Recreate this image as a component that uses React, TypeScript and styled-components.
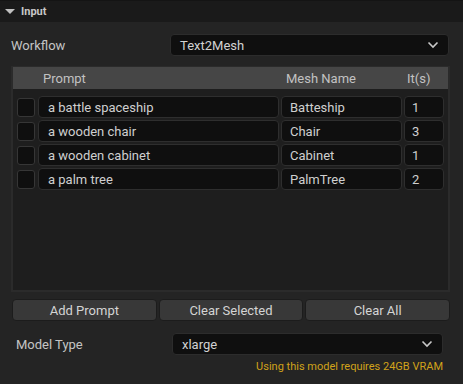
import styled, { createGlobalStyle } from "styled-components";

const GlobalStyle = createGlobalStyle`
    html, body {
        margin: 0;
        padding: 0;
        background: #242424;
    }
    body {
        font-family: Roboto, "Noto Sans", sans-serif;
        color: #c4c4c4;
    }
`

const Page = styled.div`
    width: 463px;
    height: 384px;
    background: #242424;
    overflow: hidden;
`

const SectionHeader = styled.div`
    height: 21px;
    border-top: 1px solid #141414;
    background: #1a1a1a;
    display: flex;
    align-items: center;
    padding-left: 5px;
    font-size: 11px;
    font-weight: 700;
    color: #c8c8c8;
`

const Arrow = styled.span`
    width: 0;
    height: 0;
    border-left: 5px solid transparent;
    border-right: 5px solid transparent;
    border-top: 5px solid #c0c0c0;
    margin-right: 6px;
`

const Content = styled.div`
    padding: 0 13px 0 11px;
`

const FieldRow = styled.div <{ top: number, indent: number, right: number }>`
    display: flex;
    align-items: center;
    margin-top: ${props => props.top}px;
    padding-left: ${props => props.indent}px;
    padding-right: ${props => props.right}px;
`

const Label = styled.div <{ width: number }>`
    width: ${props => props.width}px;
    font-size: 13px;
    color: #c4c4c4;
`

const Dropdown = styled.div`
    flex: 1;
    height: 20px;
    background: #0f0f0f;
    border: 1px solid #2c2c2c;
    border-radius: 4px;
    display: flex;
    align-items: center;
    justify-content: space-between;
    padding: 0 9px;
    font-size: 13px;
    color: #d2d2d2;
`

const Chevron = () => (
    <svg width="12" height="8" viewBox="0 0 12 8">
        <path d="M1.5 1.5 L6 6 L10.5 1.5" stroke="#c8c8c8" strokeWidth="1.6" fill="none" />
    </svg>
)

const TablePanel = styled.div`
    margin-top: 10px;
    height: 223px;
    border: 2px solid #2b2b2b;
    border-top-width: 1px;
    background: #1e1e1e;
`

const Columns = `
    display: grid;
    grid-template-columns: 19px 241px 121px 40px;
    column-gap: 2px;
`

const HeaderRow = styled.div`
    ${Columns}
    height: 22px;
    align-items: center;
    background: #464646;
    padding-left: 4px;
    font-size: 13px;
    color: #c2c2c2;
`

const HeaderCell = styled.div <{ offset: number }>`
    padding-left: ${props => props.offset}px;
`

const Rows = styled.div`
    padding: 7px 0 0 4px;
    display: flex;
    flex-direction: column;
    gap: 2px;
`

const Row = styled.div`
    ${Columns}
    height: 22px;
`

const CheckBox = styled.div`
    box-sizing: border-box;
    height: 19px;
    width: 18px;
    align-self: center;
    background: #0f0f0f;
    border: 1px solid #363636;
    border-radius: 3px;
`

const TextBox = styled.div <{ pad: number }>`
    box-sizing: border-box;
    background: #0f0f0f;
    border: 1px solid #2e2e2e;
    border-radius: 4px;
    display: flex;
    align-items: center;
    padding-left: ${props => props.pad}px;
    font-size: 13px;
    color: #cfcfcf;
`

const ButtonRow = styled.div`
    margin-top: 7px;
    padding-left: 1px;
    display: grid;
    grid-template-columns: 1fr 1fr 1fr;
    column-gap: 2px;
`

const Button = styled.div`
    height: 20px;
    background: #383838;
    border: 1px solid #1c1c1c;
    border-radius: 4px;
    display: flex;
    align-items: center;
    justify-content: center;
    font-size: 13px;
    color: #d4d4d4;
`

const Warning = styled.div`
    margin-top: 5px;
    padding-right: 7px;
    text-align: right;
    font-size: 11px;
    color: #d1a21a;
`

const prompts = [
    { prompt: "a battle spaceship", mesh: "Batteship", count: 1 },
    { prompt: "a wooden chair", mesh: "Chair", count: 3 },
    { prompt: "a wooden cabinet", mesh: "Cabinet", count: 1 },
    { prompt: "a palm tree", mesh: "PalmTree", count: 2 },
]

export default function App() {
    return (
        <Page>
            <GlobalStyle />
            <SectionHeader><Arrow />Input</SectionHeader>
            <Content>
                <FieldRow top={12} indent={0} right={1}>
                    <Label width={159}>Workflow</Label>
                    <Dropdown>Text2Mesh<Chevron /></Dropdown>
                </FieldRow>
                <TablePanel>
                    <HeaderRow>
                        <HeaderCell offset={0} />
                        <HeaderCell offset={5}>Prompt</HeaderCell>
                        <HeaderCell offset={5}>Mesh Name</HeaderCell>
                        <HeaderCell offset={3}>It(s)</HeaderCell>
                    </HeaderRow>
                    <Rows>
                        {prompts.map((p) => (
                            <Row key={p.mesh}>
                                <CheckBox />
                                <TextBox pad={9}>{p.prompt}</TextBox>
                                <TextBox pad={8}>{p.mesh}</TextBox>
                                <TextBox pad={7}>{p.count}</TextBox>
                            </Row>
                        ))}
                    </Rows>
                </TablePanel>
                <ButtonRow>
                    <Button>Add Prompt</Button>
                    <Button>Clear Selected</Button>
                    <Button>Clear All</Button>
                </ButtonRow>
                <FieldRow top={12} indent={5} right={7}>
                    <Label width={156}>Model Type</Label>
                    <Dropdown>xlarge<Chevron /></Dropdown>
                </FieldRow>
                <Warning>Using this model requires 24GB VRAM</Warning>
            </Content>
        </Page>
    )
}
